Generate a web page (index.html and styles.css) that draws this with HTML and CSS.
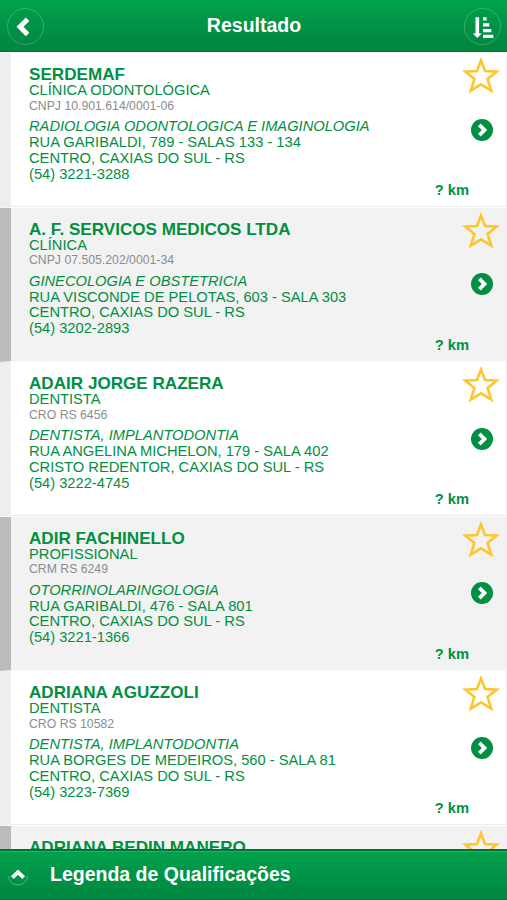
FILE: index.html
```html
<!DOCTYPE html>
<html lang="pt-BR">
  <head>
    <meta charset="UTF-8" />
    <meta name="viewport" content="width=device-width, initial-scale=1.0" />
    <title>Resultado</title>
    <link rel="stylesheet" href="styles.css">
  </head>
  <body>
    <!-- Shared icons -->
    <svg class="sprite">
      <symbol id="star" viewBox="0 0 38 37">
        <path d="M19 3.4 L23 14 L34.6 14.6 L25.6 22 L29.2 33.6 L19 27.3 L8.8 33.6 L12.4 22 L3.4 14.6 L15 14 Z" fill="none" stroke="#fdc62f" stroke-width="2.6" />
      </symbol>
      <symbol id="go" viewBox="0 0 22 22">
        <circle cx="11" cy="11" r="11" fill="#008f43" />
        <path d="M8.3 5.8 L13.5 11 L8.3 16.2" fill="none" stroke="#fff" stroke-width="3.8" />
      </symbol>
    </svg>

    <header class="header">
      <a href="#" class="round-btn" aria-label="Voltar">
        <svg width="37" height="37" viewBox="0 0 37 37">
          <path d="M20.6 11.2 L13 18.8 L20.6 26.4" fill="none" stroke="#fff" stroke-width="5" />
        </svg>
      </a>
      <h1>Resultado</h1>
      <a href="#" class="round-btn" aria-label="Ordenar">
        <svg width="37" height="37" viewBox="0 0 37 37" fill="#fff">
          <path d="M11.5 9.3h3.6v16.3h2.7l-4.5 4.5-4.5-4.5h2.7z" />
          <path d="M19 9.3h3.6v3.2H19zM19 15.2h6.3v3.2H19zM19 21h8.3v3.2H19zM19 26.8h10.4v3.3H19z" />
        </svg>
      </a>
    </header>

    <main class="list">
      <article class="row">
        <div class="info">
          <h2>SERDEMAF</h2>
          <p>CLÍNICA ODONTOLÓGICA</p>
          <p class="doc">CNPJ 10.901.614/0001-06</p>
          <p class="specialty">RADIOLOGIA ODONTOLOGICA E IMAGINOLOGIA</p>
          <p>RUA GARIBALDI, 789 - SALAS 133 - 134</p>
          <p>CENTRO, CAXIAS DO SUL - RS</p>
          <p>(54) 3221-3288</p>
          <p class="distance">? km</p>
        </div>
        <div class="actions">
          <svg class="star"><use href="#star" /></svg>
          <svg class="go"><use href="#go" /></svg>
        </div>
      </article>

      <article class="row">
        <div class="info">
          <h2>A. F. SERVICOS MEDICOS LTDA</h2>
          <p>CLÍNICA</p>
          <p class="doc">CNPJ 07.505.202/0001-34</p>
          <p class="specialty">GINECOLOGIA E OBSTETRICIA</p>
          <p>RUA VISCONDE DE PELOTAS, 603 - SALA 303</p>
          <p>CENTRO, CAXIAS DO SUL - RS</p>
          <p>(54) 3202-2893</p>
          <p class="distance">? km</p>
        </div>
        <div class="actions">
          <svg class="star"><use href="#star" /></svg>
          <svg class="go"><use href="#go" /></svg>
        </div>
      </article>

      <article class="row">
        <div class="info">
          <h2>ADAIR JORGE RAZERA</h2>
          <p>DENTISTA</p>
          <p class="doc">CRO RS 6456</p>
          <p class="specialty">DENTISTA, IMPLANTODONTIA</p>
          <p>RUA ANGELINA MICHELON, 179 - SALA 402</p>
          <p>CRISTO REDENTOR, CAXIAS DO SUL - RS</p>
          <p>(54) 3222-4745</p>
          <p class="distance">? km</p>
        </div>
        <div class="actions">
          <svg class="star"><use href="#star" /></svg>
          <svg class="go"><use href="#go" /></svg>
        </div>
      </article>

      <article class="row">
        <div class="info">
          <h2>ADIR FACHINELLO</h2>
          <p>PROFISSIONAL</p>
          <p class="doc">CRM RS 6249</p>
          <p class="specialty">OTORRINOLARINGOLOGIA</p>
          <p>RUA GARIBALDI, 476 - SALA 801</p>
          <p>CENTRO, CAXIAS DO SUL - RS</p>
          <p>(54) 3221-1366</p>
          <p class="distance">? km</p>
        </div>
        <div class="actions">
          <svg class="star"><use href="#star" /></svg>
          <svg class="go"><use href="#go" /></svg>
        </div>
      </article>

      <article class="row">
        <div class="info">
          <h2>ADRIANA AGUZZOLI</h2>
          <p>DENTISTA</p>
          <p class="doc">CRO RS 10582</p>
          <p class="specialty">DENTISTA, IMPLANTODONTIA</p>
          <p>RUA BORGES DE MEDEIROS, 560 - SALA 81</p>
          <p>CENTRO, CAXIAS DO SUL - RS</p>
          <p>(54) 3223-7369</p>
          <p class="distance">? km</p>
        </div>
        <div class="actions">
          <svg class="star"><use href="#star" /></svg>
          <svg class="go"><use href="#go" /></svg>
        </div>
      </article>

      <article class="row">
        <div class="info">
          <h2>ADRIANA BEDIN MANERO</h2>
        </div>
        <div class="actions">
          <svg class="star"><use href="#star" /></svg>
        </div>
      </article>
    </main>

    <footer class="footer">
      <svg class="up" width="22" height="22" viewBox="0 0 22 22">
        <path d="M1.5 12a9.5 9 0 0 0 19 0" fill="none" stroke="#4db87b" stroke-width="1" />
        <path d="M5.3 13.6 L11 8.2 L16.7 13.6" fill="none" stroke="#fff" stroke-width="3.9" />
      </svg>
      <span>Legenda de Qualificações</span>
    </footer>
  </body>
</html>
```
FILE: styles.css
```css
* {
  margin: 0;
  padding: 0;
  box-sizing: border-box;
}

body {
  font-family: "Liberation Sans", Arial, sans-serif;
  height: 100vh;
  display: flex;
  flex-direction: column;
  overflow: hidden;
  background: #fff;
  color: #008f43;
}

.sprite {
  display: none;
}

/* Top bar */
.header {
  flex: none;
  height: 52px;
  padding: 2px 6px 0 7px;
  display: flex;
  justify-content: space-between;
  align-items: center;
  background: linear-gradient(#00a24c, #00853f);
  border-bottom: 1px solid #007438;
  color: #fff;
}

.header h1 {
  font-size: 19.5px;
  line-height: 24px;
  padding-bottom: 3px;
}

.round-btn {
  width: 37px;
  height: 37px;
  border-radius: 50%;
  border: 1px solid rgba(255, 255, 255, 0.22);
  display: flex;
  align-items: center;
  justify-content: center;
}

.round-btn svg {
  flex: none;
}

/* Results */
.list {
  flex: 1;
  min-height: 0;
  overflow: hidden;
  padding-top: 1px;
}

.row {
  height: 154.5px;
  display: flex;
  background: #fff;
  border-left: 11px solid #eee;
  border-right: 1px solid #eee;
  border-bottom: 1px solid #fff;
  box-shadow: inset 0 -1px #ececec;
}

.row:nth-child(even) {
  background: #f2f2f2;
  border-left-color: #bbb;
  border-bottom-color: #f8f8f8;
  box-shadow: none;
}

.info {
  flex: 1;
  padding: 13px 0 0 18px;
  font-size: 14.7px;
  line-height: 15.75px;
  white-space: nowrap;
}

.info h2 {
  font-size: 17.1px;
  line-height: 17px;
}

.info .doc {
  font-size: 12.25px;
  line-height: 15px;
  margin-bottom: 5.7px;
  color: #888d90;
}

.info .specialty {
  font-style: italic;
}

.info .distance {
  font-weight: bold;
  text-align: right;
  padding-top: 0.6px;
}

.actions {
  width: 37px;
  padding-top: 4px;
}

.star {
  display: block;
  width: 38px;
  height: 37px;
  margin-left: -7px;
}

.go {
  display: block;
  width: 22px;
  height: 22px;
  margin: 24.5px 0 0 2px;
}

/* Bottom bar */
.footer {
  flex: none;
  height: 51px;
  padding: 0 0 2px 7px;
  display: flex;
  align-items: center;
  background: linear-gradient(#00a24c, #00853f);
  border-top: 2px solid #007438;
  box-shadow: inset 0 1px #2bb06a, inset 0 -1px #007438;
  color: #fff;
  font-size: 19.5px;
  font-weight: bold;
}

.up {
  margin-right: 21px;
}
```
